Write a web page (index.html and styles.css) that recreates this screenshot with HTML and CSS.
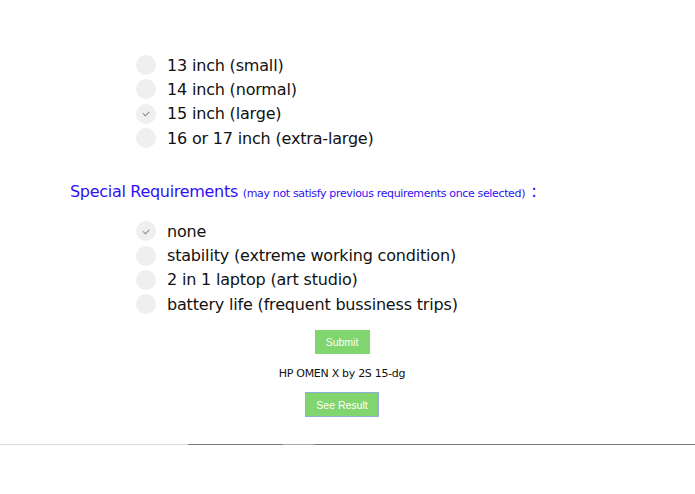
FILE: index.html
```html
<!DOCTYPE html>
<html>
<head>
<meta charset="utf-8">
<link rel="stylesheet" href="styles.css">
</head>
<body>
<div class="page">
  <div class="options first">
    <div class="opt"><span class="radio"></span><span class="label">13 inch (small)</span></div>
    <div class="opt"><span class="radio"></span><span class="label">14 inch (normal)</span></div>
    <div class="opt"><span class="radio checked"></span><span class="label">15 inch (large)</span></div>
    <div class="opt"><span class="radio"></span><span class="label">16 or 17 inch (extra-large)</span></div>
  </div>
  <div class="heading">Special Requirements <span class="note">(may not satisfy previous requirements once selected)</span> <span class="colon">:</span></div>
  <div class="options second">
    <div class="opt"><span class="radio checked"></span><span class="label">none</span></div>
    <div class="opt"><span class="radio"></span><span class="label">stability (extreme working condition)</span></div>
    <div class="opt"><span class="radio"></span><span class="label">2 in 1 laptop (art studio)</span></div>
    <div class="opt"><span class="radio"></span><span class="label">battery life (frequent bussiness trips)</span></div>
  </div>
  <div class="actions">
    <button class="btn submit">Submit</button>
    <div class="result">HP OMEN X by 2S 15-dg</div>
    <button class="btn see">See Result</button>
  </div>
  <div class="rule">
    <span class="seg light" style="width:188px"></span>
    <span class="seg dark" style="width:95px"></span>
    <span class="seg mid" style="width:31px"></span>
    <span class="seg dark grow"></span>
  </div>
</div>
</body>
</html>
```
FILE: styles.css
```css
html, body {
  margin: 0;
  padding: 0;
  background: #fff;
}
.page {
  width: 695px;
  height: 494px;
  font-family: "DejaVu Sans", Verdana, sans-serif;
  color: #111;
}
.options {
  display: flex;
  flex-direction: column;
  padding-left: 136px;
}
.options.first {
  padding-top: 53px;
}
.options.second {
  padding-top: 14px;
}
.opt {
  display: flex;
  align-items: center;
  height: 24.3px;
}
.radio {
  width: 20px;
  height: 20px;
  border-radius: 50%;
  background: #efefef;
  margin-right: 11px;
  display: inline-flex;
  align-items: center;
  justify-content: center;
  flex: none;
}
.radio.checked::after {
  content: "";
  width: 5px;
  height: 2.5px;
  border-left: 1px solid #888;
  border-bottom: 1px solid #888;
  transform: rotate(-45deg);
  margin-top: -1px;
}
.label {
  font-size: 16px;
  letter-spacing: -0.18px;
  color: #111;
}
.heading {
  padding-left: 70px;
  padding-top: 30px;
  color: #2f10f5;
  font-size: 16px;
  letter-spacing: -0.3px;
  line-height: 22px;
  white-space: nowrap;
}
.note {
  font-size: 11px;
  letter-spacing: -0.35px;
}
.colon {
  font-size: 18px;
  margin-left: 1px;
}
.actions {
  width: 684px;
  display: flex;
  flex-direction: column;
  align-items: center;
  padding-top: 14px;
}
.btn {
  font-family: "Liberation Sans", Arial, sans-serif;
  font-size: 10.5px;
  color: #fff;
  background: #80d56f;
  border: 1px solid #80d56f;
  padding: 0;
  display: flex;
  align-items: center;
  justify-content: center;
}
.submit {
  width: 55px;
  height: 24px;
}
.result {
  font-family: "DejaVu Sans", Verdana, sans-serif;
  font-size: 11px;
  letter-spacing: -0.3px;
  color: #111;
  margin-top: 12px;
  line-height: 15px;
}
.see {
  width: 74px;
  height: 25px;
  margin-top: 11px;
  border-color: #8faed8;
}
.rule {
  display: flex;
  margin-top: 27px;
  height: 1px;
  width: 695px;
}
.seg {
  height: 1px;
  display: block;
}
.seg.light { background: #dcdcdc; }
.seg.dark { background: #7a7a7a; }
.seg.mid { background: #a8a8a8; }
.seg.grow { flex: 1; }
```
